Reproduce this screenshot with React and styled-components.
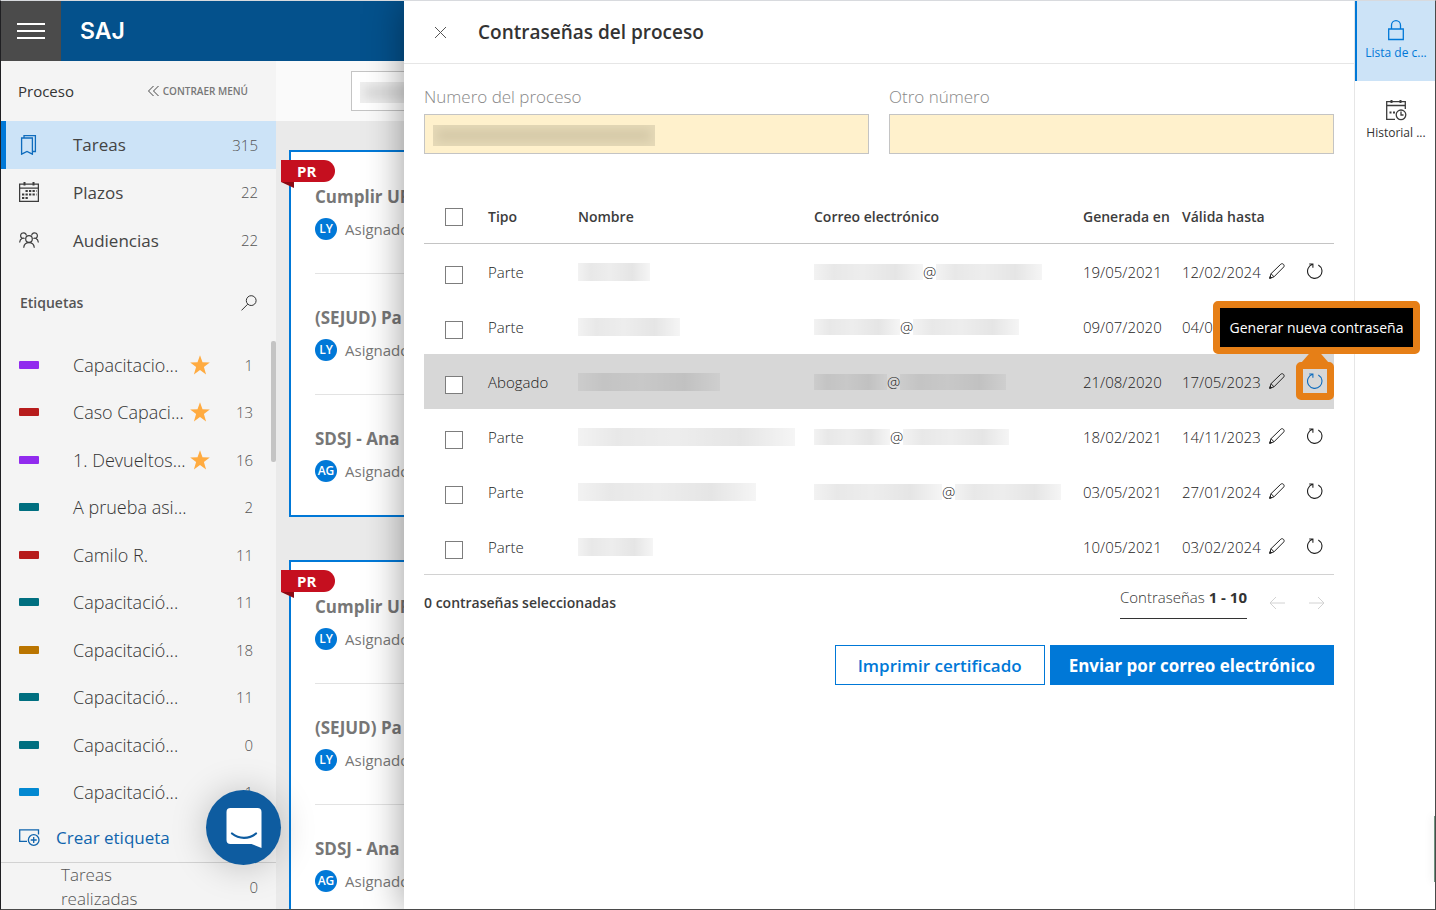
import React from 'react';
import styled, { createGlobalStyle, css } from 'styled-components';

const GlobalStyle = createGlobalStyle`
  * {
    box-sizing: border-box;
  }

  body {
    margin: 0;
    font-family: 'Open Sans', 'Noto Sans', sans-serif;
    font-size: 14px;
    color: #333;
  }

  button, input {
    font-family: inherit;
    font-size: inherit;
    color: inherit;
  }

  button {
    padding: 0;
    border: 0;
    background: none;
    cursor: pointer;
  }

  svg {
    display: block;
    flex: none;
  }
`;

const Shell = styled.div`
  position: relative;
  display: flex;
  flex-direction: column;
  height: 100vh;
  overflow: hidden;
  border: 1px solid #4a4a4a;
  border-top-color: #d8dade;
  border-left-color: #1f1f22;
`;

const TopBar = styled.header`
  display: flex;
  align-items: center;
  flex: none;
  height: 60px;
  background: #04518c;
`;

const MenuButton = styled.button`
  display: flex;
  align-items: center;
  justify-content: center;
  width: 60px;
  height: 60px;
  background: #4b4b4b;
`;

const Logo = styled.span`
  margin-left: 19px;
  font-family: Inter, sans-serif;
  font-size: 23px;
  font-weight: 600;
  color: #fff;
`;

const Body = styled.div`
  display: flex;
  flex: 1;
  min-height: 0;
`;

const Sidebar = styled.aside`
  flex: none;
  width: 275px;
  background: #f4f4f4;
  overflow: hidden;
`;

const SidebarTop = styled.div`
  display: flex;
  align-items: center;
  justify-content: space-between;
  height: 60px;
  padding: 0 28px 0 17px;
  font-size: 15px;
  color: #333;
`;

const CollapseButton = styled.button`
  display: flex;
  align-items: center;
  gap: 4px;
  font-size: 10px;
  font-weight: 600;
  color: #777;
`;

const NavList = styled.nav`
  display: grid;
  grid-auto-rows: 1fr;
  height: 143px;
`;

const NavItem = styled.a`
  display: grid;
  grid-template-columns: 54px 1fr auto;
  align-items: center;
  padding: 0 18px;
  font-size: 17px;
  font-weight: 500;
  color: #444;
  text-decoration: none;

  ${({ $active }) => $active && css`
    background: #cce3f7;
    box-shadow: inset 5px 0 0 #0078d7;
  `}
`;

const Count = styled.span`
  font-size: 15px;
  font-weight: 300;
  color: #555;
`;

const LabelsTop = styled.div`
  display: flex;
  align-items: center;
  justify-content: space-between;
  height: 77px;
  padding: 0 19px;
  font-size: 14px;
  font-weight: 600;
  color: #555;
`;

const LabelList = styled.div`
  position: relative;
  display: grid;
  grid-auto-rows: 1fr;
  height: 475px;
`;

const LabelItem = styled.a`
  display: grid;
  grid-template-columns: 54px 117px 1fr auto;
  align-items: center;
  padding: 0 23px 0 18px;
  font-size: 18px;
  font-weight: 300;
  color: #333;
  text-decoration: none;
  white-space: nowrap;
`;

const Swatch = styled.span`
  width: 20px;
  height: 8px;
  border-radius: 1px;
  background: ${({ $color }) => $color};
`;

const ScrollThumb = styled.div`
  position: absolute;
  top: 0;
  right: 0;
  width: 5px;
  height: 121px;
  border-radius: 2px;
  background: #c4c4c4;
`;

const CreateLabel = styled.button`
  display: flex;
  align-items: center;
  gap: 16px;
  width: 100%;
  height: 47px;
  padding: 0 18px 3px;
  border-bottom: 1px solid #d2d2d2;
  font-size: 17px;
  font-weight: 400;
  color: #0f64ad;
`;

const DoneTasks = styled.a`
  display: flex;
  align-items: center;
  justify-content: space-between;
  padding: 0 18px 0 60px;
  font-size: 17px;
  font-weight: 300;
  line-height: 24px;
  color: #555;
  text-decoration: none;

  span:first-child {
    width: 100px;
  }
`;

const Content = styled.main`
  flex: 1;
  min-width: 0;
  background: #eaeaea;
  overflow: hidden;
`;

const ContentTop = styled.div`
  display: flex;
  align-items: center;
  height: 60px;
  padding-left: 75px;
  background: #fafafa;
`;

const SearchBox = styled.div`
  position: relative;
`;

const SearchInput = styled.input`
  width: 360px;
  height: 40px;
  border: 1px solid #c4c4c4;
  background: #fff;
`;

const Blurred = styled.span`
  display: inline-block;
  width: ${({ $width }) => $width}px;
  height: ${({ $tall }) => ($tall ? 18 : 16)}px;
  background: linear-gradient(
    90deg,
    rgba(0, 0, 0, 0.05),
    rgba(0, 0, 0, 0.09) 18%,
    rgba(0, 0, 0, 0.07) 45%,
    rgba(0, 0, 0, 0.1) 75%,
    rgba(0, 0, 0, 0.04)
  );
`;

const FieldBlur = styled.span`
  position: absolute;
  top: 11px;
  left: 9px;
  width: ${({ $width }) => $width}px;
  height: 21px;
  background: ${({ $color }) => $color};
  box-shadow: inset 0 0 10px 4px ${({ $edge }) => $edge};
  pointer-events: none;
`;

const Cards = styled.div`
  display: flex;
  flex-direction: column;
  gap: 43px;
  padding: 29px 13px;
`;

const Card = styled.section`
  position: relative;
  flex: none;
  height: 367px;
  border: 2px solid #0078d7;
  background: #fff;
`;

const Ribbon = styled.span`
  position: absolute;
  top: 8px;
  left: -10px;
  width: 54px;
  height: 22px;
  padding-left: 16px;
  border-radius: 0 11px 11px 0;
  background: #c50f1f;
  font-size: 15px;
  font-weight: 700;
  line-height: 22px;
  color: #fff;

  &::after {
    content: '';
    position: absolute;
    top: 22px;
    left: 0;
    border-top: 6px solid #8c0a14;
    border-left: 13px solid transparent;
  }
`;

const Task = styled.article`
  height: 121px;
  margin: 0 24px;
  padding-top: 32px;
  color: #777;
  white-space: nowrap;

  & + & {
    padding-top: 31px;
    border-top: 1px solid #e3e3e3;
  }
`;

const TaskTitle = styled.h3`
  margin: 0;
  font-size: 17px;
  font-weight: 700;
  line-height: 26px;
`;

const Assignee = styled.div`
  display: flex;
  align-items: center;
  gap: 8px;
  margin-top: 8px;
  font-size: 15px;
`;

const Avatar = styled.span`
  display: flex;
  align-items: center;
  justify-content: center;
  width: 22px;
  height: 22px;
  border-radius: 50%;
  background: #0078d7;
  font-size: 12px;
  font-weight: 600;
  line-height: 20px;
  color: #fff;
`;

const Drawer = styled.section`
  position: absolute;
  top: 0;
  right: 0;
  bottom: 0;
  left: 403px;
  display: flex;
  background: #fff;
  box-shadow: 0 0 36px rgba(0, 0, 0, 0.4);
`;

const DrawerMain = styled.div`
  flex: 1;
  min-width: 0;
`;

const DrawerHeader = styled.header`
  display: flex;
  align-items: center;
  gap: 31px;
  height: 63px;
  padding: 0 30px;
  border-bottom: 1px solid #e6e6e6;
`;

const DrawerTitle = styled.h2`
  margin: 0;
  font-size: 19px;
  font-weight: 600;
  line-height: 28px;
  color: #333;
`;

const DrawerBody = styled.div`
  padding: 20px;
`;

const Fields = styled.div`
  display: grid;
  grid-template-columns: 1fr 1fr;
  gap: 20px;
`;

const FieldLabel = styled.label`
  display: block;
  height: 30px;
  font-size: 17px;
  font-weight: 300;
  line-height: 26px;
  color: #888;
`;

const FieldBox = styled.div`
  position: relative;
`;

const FieldInput = styled.input`
  display: block;
  width: 100%;
  height: 40px;
  padding: 0 10px;
  border: 1px solid #c4c4c4;
  background: #fff1cc;
`;

const Table = styled.table`
  width: 100%;
  margin-top: 36px;
  border-collapse: separate;
  border-spacing: 0;
  table-layout: fixed;
  border-bottom: 1px solid #d2d2d2;
`;

const HeadCell = styled.th`
  width: ${({ $width }) => ($width ? `${$width}px` : 'auto')};
  height: 54px;
  padding: 0;
  border-bottom: 1px solid #c4c4c4;
  font-weight: 600;
  text-align: left;
  white-space: nowrap;
  color: #3c3c3c;
`;

const Row = styled.tr`
  background: ${({ $selected }) => ($selected ? '#d7d7d7' : 'transparent')};
`;

const Cell = styled.td`
  height: 55px;
  padding: 0;
  font-size: 15px;
  font-weight: 300;
  color: #222;
  white-space: nowrap;
`;

const CheckCell = styled(Cell)`
  padding-top: 6px;
`;

const IconCell = styled(Cell)`
  padding-bottom: 2px;
`;

const Checkbox = styled.input.attrs({ type: 'checkbox' })`
  appearance: none;
  display: block;
  width: 18px;
  height: 18px;
  margin: 0 0 0 21px;
  border: 1px solid #7d7d7d;
  background: #fff;
`;

const Masked = styled.span`
  display: flex;
  align-items: center;
`;

const IconButton = styled.button`
  position: relative;
  display: flex;
  align-items: center;
  justify-content: center;
  width: 38px;
  height: 38px;

  ${({ $highlight }) => $highlight && css`
    border: 7px solid #e67f17;
    border-radius: 5px;
    color: #0f6cbd;

    &::before {
      content: '';
      position: absolute;
      bottom: 100%;
      left: -2px;
      margin-bottom: 6px;
      border: solid transparent;
      border-width: 0 14px 16px;
      border-bottom-color: #e67f17;
    }
  `}
`;

const RefreshBox = styled.div`
  position: relative;
  width: 38px;
`;

const Tooltip = styled.span`
  position: absolute;
  right: -86px;
  bottom: 46px;
  width: 207px;
  height: 53px;
  border: 7px solid #e67f17;
  border-radius: 5px;
  background: #000;
  font-size: 14px;
  font-weight: 400;
  line-height: 39px;
  text-align: center;
  color: #fff;
`;

const TableFooter = styled.div`
  display: flex;
  align-items: flex-start;
  justify-content: space-between;
  height: 70px;
`;

const Selected = styled.span`
  line-height: 56px;
  font-weight: 600;
  color: #3c3c3c;
`;

const Pager = styled.div`
  display: flex;
  align-items: flex-start;
  padding-right: 9px;
`;

const Range = styled.span`
  height: 44px;
  margin-right: 22px;
  border-bottom: 1px solid #333;
  font-size: 15px;
  font-weight: 300;
  line-height: 44px;

  b {
    font-weight: 700;
  }
`;

const PageButton = styled.button`
  height: 56px;
  color: #d2d2d2;

  & + & {
    margin-left: 24px;
  }
`;

const Actions = styled.div`
  display: flex;
  justify-content: flex-end;
  gap: 5px;
`;

const ActionButton = styled.button`
  height: 40px;
  padding: 0 ${({ $primary }) => ($primary ? 18 : 22)}px;
  border: 1px solid #0078d7;
  font-size: 17px;
  font-weight: ${({ $primary }) => ($primary ? 700 : 600)};
  background: ${({ $primary }) => ($primary ? '#0078d7' : '#fff')};
  color: ${({ $primary }) => ($primary ? '#fff' : '#0078d7')};
`;

const Rail = styled.nav`
  flex: none;
  width: 81px;
  border-left: 1px solid #e6e6e6;
`;

const RailItem = styled.button`
  display: flex;
  flex-direction: column;
  align-items: center;
  gap: 3px;
  width: 100%;
  height: 80px;
  padding: 0 0 1px 2px;
  font-size: 12px;
  line-height: 18px;
  color: #333;

  ${({ $active }) => $active && css`
    background: #cce3f7;
    box-shadow: inset 2px 0 0 #0078d7;
    color: #0078d7;
  `}

  svg {
    margin-top: 18px;
  }
`;

const ChatButton = styled.button`
  position: absolute;
  left: 205px;
  bottom: 44px;
  display: flex;
  align-items: center;
  justify-content: center;
  width: 75px;
  height: 75px;
  border-radius: 50%;
  background: #0e5ca0;
  box-shadow: 0 2px 36px rgba(0, 0, 0, 0.22);
`;

const EdgeTab = styled.div`
  position: absolute;
  right: 0;
  bottom: 27px;
  width: 1px;
  height: 66px;
  background: #6f9480;
  box-shadow: 0 0 10px rgba(0, 0, 0, 0.3);
`;

const MenuIcon = () => (
  <svg width="28" height="18" viewBox="0 0 28 18" stroke="#fff" strokeWidth="2">
    <path d="M0 2h28M0 9h28M0 16h28" />
  </svg>
);

const CollapseIcon = () => (
  <svg width="11" height="12" viewBox="0 0 11 12" fill="none" stroke="#444">
    <path d="M5.5 1l-5 5 5 5M10.5 1l-5 5 5 5" />
  </svg>
);

const BookmarksIcon = () => (
  <svg width="20" height="20" viewBox="0 0 20 20" fill="none" stroke="#0f6cbd" strokeWidth="1.3">
    <path d="M2.600 3h10.800v16.200L8 16.400l-5.400 2.800zM5 3V.7h11.400v15.800h-3" />
  </svg>
);

const CalendarIcon = () => (
  <svg width="20" height="20" viewBox="0 0 20 20" fill="none" stroke="#3c3c3c" strokeWidth="1.300">
    <path d="M.6 2.100h18.800v17.300H.6zM.6 6.200h18.800" />
    <path d="M5.500 0v3.500M14.500 0v3.500" strokeWidth="2" />
    <path d="M6.500 9h11M3 12.500h14.500M3 16h6.500" strokeWidth="2.200" strokeDasharray="2.300 1.200" />
  </svg>
);

const PeopleIcon = () => (
  <svg width="20" height="16" viewBox="0 0 20 16" fill="none" stroke="#3c3c3c" strokeWidth="1.200">
    <circle cx="10" cy="7" r="3.300" />
    <path d="M4.700 15.700c.3-3.100 2.500-5 5.300-5s5 1.900 5.300 5" />
    <path d="M7.400 3.500A2.900 2.900 0 1 0 3.200 6.300C1.700 7.100.8 8.500.6 10.500M5.600 6.600c-.8-.5-1.600-.5-2.400-.3M12.600 3.500a2.900 2.900 0 1 1 4.200 2.800c1.500.8 2.400 2.200 2.600 4.200M14.400 6.600c.8-.5 1.600-.5 2.400-.3" />
  </svg>
);

const SearchIcon = () => (
  <svg width="16" height="16" viewBox="0 0 16 16" fill="none" stroke="#333">
    <circle cx="10.200" cy="5.600" r="4.900" />
    <path d="M6.700 9.200L.5 15.400" />
  </svg>
);

const StarIcon = () => (
  <svg width="20" height="20" viewBox="0 0 20 20" fill="#ffab40">
    <path d="M10 .2l2.500 7.100 7.300.1-5.900 4.500 2.200 7.500-6.100-4.500-6.100 4.500 2.200-7.500L.2 7.400l7.300-.1z" />
  </svg>
);

const AddLabelIcon = () => (
  <svg width="21" height="17" viewBox="0 0 21 17" fill="none" stroke="#0f64ad" strokeWidth="1.300">
    <path d="M8 12.300H.7V.9h18.800v4.500" />
    <circle cx="14.700" cy="11" r="5.300" />
    <path d="M14.700 8v6M11.700 11h6" />
  </svg>
);

const CloseIcon = () => (
  <svg width="13" height="13" viewBox="0 0 13 13" stroke="#555">
    <path d="M1 1l11 11M12 1L1 12" />
  </svg>
);

const PencilIcon = () => (
  <svg width="16" height="16" viewBox="0 0 16 16" fill="none" stroke="currentColor" strokeLinejoin="round">
    <path d="M.7 15.300l1.300-4.600L11.800 1.200c1.800-1.600 4.400 1 2.900 2.800L5 13.800zM2 10.700l3 3.100" />
    <path d="M.7 15.300l.6-2 1.400 1.400z" fill="currentColor" />
  </svg>
);

const RefreshIcon = () => (
  <svg width="16" height="16" viewBox="0 0 16 16" fill="none" stroke="currentColor" strokeWidth="1.100">
    <path d="M11.300 1.900A7.200 7.200 0 1 1 5.600 1.300M2.200 1h3.700v3.800" />
  </svg>
);

const ArrowIcon = ({ right }) => (
  <svg width="16" height="14" viewBox="0 0 16 14" fill="none" stroke="currentColor">
    <path d={right ? 'M0 7h15M9 1l6 6-6 6' : 'M16 7H1M7 1L1 7l6 6'} />
  </svg>
);

const LockIcon = () => (
  <svg width="18" height="22" viewBox="0 0 18 22" fill="none" stroke="#0078d7" strokeWidth="1.300">
    <path d="M1.700 10h14.600v10.500H1.700zM4.500 10V6.200a4.500 4.500 0 0 1 9 0V10" />
  </svg>
);

const HistoryIcon = () => (
  <svg width="22" height="22" viewBox="0 0 22 22" fill="none" stroke="#3c3c3c" strokeWidth="1.300">
    <path d="M10 20.300H1.700V2.700h18.600V10M1.700 6.500h18.600" />
    <path d="M6.500 1v3M15.500 1v3" strokeWidth="2" />
    <path d="M4.500 13.500h2M8 13.500h2" strokeWidth="2" />
    <circle cx="16" cy="15.800" r="4.800" />
    <path d="M16 12.500v3.500h2.500" />
  </svg>
);

const ChatIcon = () => (
  <svg width="36" height="40" viewBox="0 0 36 40">
    <path d="M4.500 0h27A4 4 0 0 1 35.500 4v36l-10-4h-21a4 4 0 0 1-4-4V4a4 4 0 0 1 4-4z" fill="#fff" />
    <path d="M6 25.500c7 5.700 17 5.700 24 0" fill="none" stroke="#0e5ca0" strokeWidth="2.200" strokeLinecap="round" />
  </svg>
);

const navItems = [
  { name: 'Tareas', count: 315, icon: <BookmarksIcon />, active: true },
  { name: 'Plazos', count: 22, icon: <CalendarIcon /> },
  { name: 'Audiencias', count: 22, icon: <PeopleIcon /> }
];

const labels = [
  { name: 'Capacitacio...', color: '#912bee', count: 1, starred: true },
  { name: 'Caso Capaci...', color: '#b71c1c', count: 13, starred: true },
  { name: '1. Devueltos...', color: '#912bee', count: 16, starred: true },
  { name: 'A prueba asi...', color: '#006f80', count: 2 },
  { name: 'Camilo R.', color: '#b71c1c', count: 11 },
  { name: 'Capacitació...', color: '#006f80', count: 11 },
  { name: 'Capacitació...', color: '#ba7500', count: 18 },
  { name: 'Capacitació...', color: '#006f80', count: 11 },
  { name: 'Capacitació...', color: '#006f80', count: 0 },
  { name: 'Capacitació...', color: '#0288d1', count: 1 }
];

const tasks = [
  { title: 'Cumplir UR', initials: 'LY' },
  { title: '(SEJUD) Pa', initials: 'LY' },
  { title: 'SDSJ - Ana', initials: 'AG' }
];

const passwords = [
  { type: 'Parte', name: 72, user: 109, created: '19/05/2021', expires: '12/02/2024' },
  { type: 'Parte', name: 102, user: 86, created: '09/07/2020', expires: '04/02/2024' },
  { type: 'Abogado', name: 142, user: 73, created: '21/08/2020', expires: '17/05/2023', selected: true },
  { type: 'Parte', name: 217, user: 76, created: '18/02/2021', expires: '14/11/2023' },
  { type: 'Parte', name: 178, user: 128, created: '03/05/2021', expires: '27/01/2024' },
  { type: 'Parte', name: 75, created: '10/05/2021', expires: '03/02/2024' }
];

const TaskCard = () => (
  <Card>
    <Ribbon>PR</Ribbon>
    {tasks.map((task) => (
      <Task key={task.title}>
        <TaskTitle>{task.title}</TaskTitle>
        <Assignee>
          <Avatar>{task.initials}</Avatar>
          Asignado
        </Assignee>
      </Task>
    ))}
  </Card>
);

const PasswordRow = ({ row }) => (
  <Row $selected={row.selected}>
    <CheckCell>
      <Checkbox aria-label="Seleccionar" />
    </CheckCell>
    <Cell>{row.type}</Cell>
    <Cell>
      <Masked>
        <Blurred $width={row.name} $tall />
      </Masked>
    </Cell>
    <Cell>
      {row.user && (
        <Masked>
          <Blurred $width={row.user} />
          @
          <Blurred $width={106} />
        </Masked>
      )}
    </Cell>
    <Cell>{row.created}</Cell>
    <Cell>{row.expires}</Cell>
    <IconCell>
      <IconButton aria-label="Editar">
        <PencilIcon />
      </IconButton>
    </IconCell>
    <IconCell>
      <RefreshBox>
        <IconButton aria-label="Generar nueva contraseña" $highlight={row.selected}>
          <RefreshIcon />
        </IconButton>
        {row.selected && <Tooltip role="tooltip">Generar nueva contraseña</Tooltip>}
      </RefreshBox>
    </IconCell>
  </Row>
);

const App = () => (
  <>
    <GlobalStyle />
    <Shell>
      <TopBar>
        <MenuButton aria-label="Menú">
          <MenuIcon />
        </MenuButton>
        <Logo>SAJ</Logo>
      </TopBar>

      <Body>
        <Sidebar>
          <SidebarTop>
            Proceso
            <CollapseButton>
              <CollapseIcon />
              CONTRAER MENÚ
            </CollapseButton>
          </SidebarTop>
          <NavList>
            {navItems.map((item) => (
              <NavItem key={item.name} href="#" $active={item.active}>
                {item.icon}
                {item.name}
                <Count>{item.count}</Count>
              </NavItem>
            ))}
          </NavList>
          <LabelsTop>
            Etiquetas
            <button aria-label="Buscar etiqueta">
              <SearchIcon />
            </button>
          </LabelsTop>
          <LabelList>
            {labels.map((label, index) => (
              <LabelItem key={index} href="#">
                <Swatch $color={label.color} />
                <span>{label.name}</span>
                <span>{label.starred && <StarIcon />}</span>
                <Count>{label.count}</Count>
              </LabelItem>
            ))}
            <ScrollThumb />
          </LabelList>
          <CreateLabel>
            <AddLabelIcon />
            Crear etiqueta
          </CreateLabel>
          <DoneTasks href="#">
            <span>Tareas realizadas</span>
            <Count>0</Count>
          </DoneTasks>
        </Sidebar>

        <Content>
          <ContentTop>
            <SearchBox>
              <SearchInput aria-label="Buscar" />
              <FieldBlur $width={60} $color="#dcdcdc" $edge="#f0f0f0" />
            </SearchBox>
          </ContentTop>
          <Cards>
            <TaskCard />
            <TaskCard />
          </Cards>
        </Content>
      </Body>

      <Drawer>
        <DrawerMain>
          <DrawerHeader>
            <button aria-label="Cerrar">
              <CloseIcon />
            </button>
            <DrawerTitle>Contraseñas del proceso</DrawerTitle>
          </DrawerHeader>
          <DrawerBody>
            <Fields>
              <div>
                <FieldLabel htmlFor="numero">Numero del proceso</FieldLabel>
                <FieldBox>
                  <FieldInput id="numero" />
                  <FieldBlur $width={222} $color="#d6caa9" $edge="#e6dab8" />
                </FieldBox>
              </div>
              <div>
                <FieldLabel htmlFor="otro">Otro número</FieldLabel>
                <FieldInput id="otro" />
              </div>
            </Fields>

            <Table>
              <thead>
                <tr>
                  <HeadCell $width={64}>
                    <Checkbox aria-label="Seleccionar todo" />
                  </HeadCell>
                  <HeadCell $width={90}>Tipo</HeadCell>
                  <HeadCell>Nombre</HeadCell>
                  <HeadCell $width={269}>Correo electrónico</HeadCell>
                  <HeadCell $width={99}>Generada en</HeadCell>
                  <HeadCell $width={76}>Válida hasta</HeadCell>
                  <HeadCell $width={38} />
                  <HeadCell $width={38} />
                </tr>
              </thead>
              <tbody>
                {passwords.map((row) => (
                  <PasswordRow key={row.created} row={row} />
                ))}
              </tbody>
            </Table>

            <TableFooter>
              <Selected>0 contraseñas seleccionadas</Selected>
              <Pager>
                <Range>
                  Contraseñas <b>1 - 10</b>
                </Range>
                <PageButton aria-label="Anterior">
                  <ArrowIcon />
                </PageButton>
                <PageButton aria-label="Siguiente">
                  <ArrowIcon right />
                </PageButton>
              </Pager>
            </TableFooter>

            <Actions>
              <ActionButton>Imprimir certificado</ActionButton>
              <ActionButton $primary>Enviar por correo electrónico</ActionButton>
            </Actions>
          </DrawerBody>
        </DrawerMain>

        <Rail>
          <RailItem $active>
            <LockIcon />
            Lista de c...
          </RailItem>
          <RailItem>
            <HistoryIcon />
            Historial ...
          </RailItem>
        </Rail>
      </Drawer>

      <EdgeTab />
      <ChatButton aria-label="Chat">
        <ChatIcon />
      </ChatButton>
    </Shell>
  </>
);

export default App;
